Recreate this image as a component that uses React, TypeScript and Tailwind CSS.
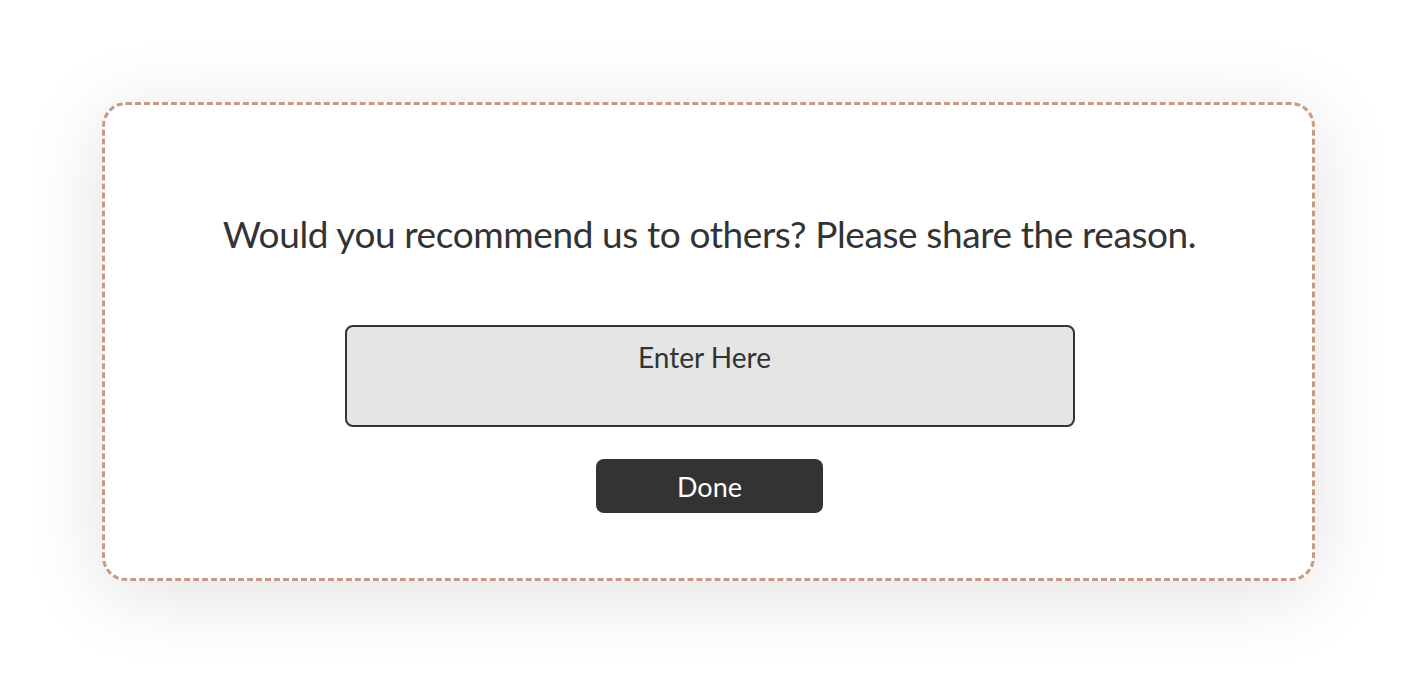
import React from "react";

export default function App() {
  return (
    <div className="w-[1418px] h-[684px] bg-white overflow-hidden pt-[102px] pl-[102px]" style={{ fontFamily: "Lato, 'Noto Sans', sans-serif" }}>
      <div className="w-[1213px] h-[479px] rounded-[24px] border-[3px] border-dashed border-[#c69b84] bg-white shadow-[0_12px_80px_rgba(0,0,0,0.12)] flex flex-col items-center pt-[105px] pl-[2px]">
        <h1 className="text-[37px] leading-[48px] text-[#333333] font-normal tracking-[-0.4px]">
          Would you recommend us to others? Please share the reason.
        </h1>
        <div className="mt-[67px] w-[730px] h-[102px] rounded-[8px] border-2 border-[#333333] bg-[#e5e5e5] flex justify-center pt-[13px]">
          <span className="text-[28px] leading-[34px] text-[#333333] h-fit pr-[10px]">Enter Here</span>
        </div>
        <button className="mt-[32px] w-[227px] h-[54px] rounded-[8px] bg-[#333333] text-white text-[27px] leading-none flex items-center justify-center">
          Done
        </button>
      </div>
    </div>
  );
}
